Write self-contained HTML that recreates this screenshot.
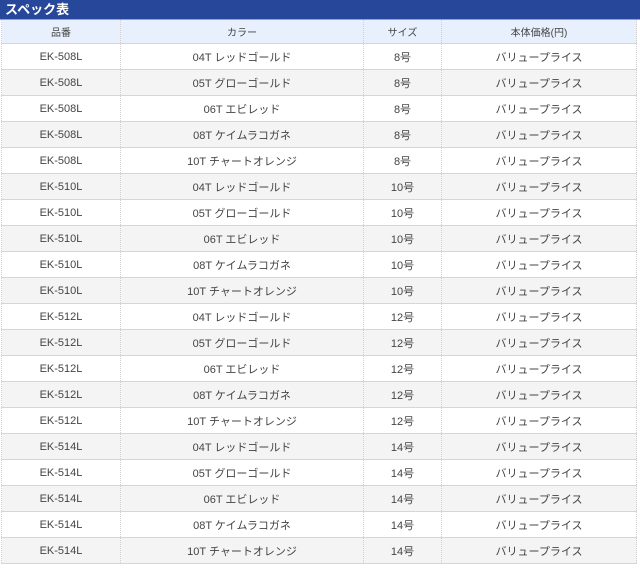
<!DOCTYPE html><html><head><meta charset="utf-8"><style>
body{margin:0;background:#fff;font-family:"Liberation Sans","Noto Sans CJK JP",sans-serif;}
.t{height:19px;background:#27479a;color:#fff;font-weight:bold;font-size:13px;line-height:19px;padding-left:5px;border-bottom:1px solid #8fa3cf}
table{border-collapse:collapse;width:636px;margin-left:1px;table-layout:fixed;font-size:11px;color:#444}
td{text-align:center;height:25px;border-bottom:1px solid #d6d6d6;border-left:1px dotted #d0d0d0;border-right:1px dotted #d0d0d0;padding:0}
tr.h td{height:23px;background:#e7f0fc;font-size:10px}
tr:nth-child(odd):not(.h) td{background:#f4f4f4}
</style></head><body><div class="t">スペック表</div>
<table><colgroup><col style="width:119px"><col style="width:243px"><col style="width:78px"><col></colgroup>
<tr class="h"><td>品番</td><td>カラー</td><td>サイズ</td><td>本体価格(円)</td></tr>
<tr><td>EK-508L</td><td>04T レッドゴールド</td><td>8号</td><td>バリュープライス</td></tr>
<tr><td>EK-508L</td><td>05T グローゴールド</td><td>8号</td><td>バリュープライス</td></tr>
<tr><td>EK-508L</td><td>06T エビレッド</td><td>8号</td><td>バリュープライス</td></tr>
<tr><td>EK-508L</td><td>08T ケイムラコガネ</td><td>8号</td><td>バリュープライス</td></tr>
<tr><td>EK-508L</td><td>10T チャートオレンジ</td><td>8号</td><td>バリュープライス</td></tr>
<tr><td>EK-510L</td><td>04T レッドゴールド</td><td>10号</td><td>バリュープライス</td></tr>
<tr><td>EK-510L</td><td>05T グローゴールド</td><td>10号</td><td>バリュープライス</td></tr>
<tr><td>EK-510L</td><td>06T エビレッド</td><td>10号</td><td>バリュープライス</td></tr>
<tr><td>EK-510L</td><td>08T ケイムラコガネ</td><td>10号</td><td>バリュープライス</td></tr>
<tr><td>EK-510L</td><td>10T チャートオレンジ</td><td>10号</td><td>バリュープライス</td></tr>
<tr><td>EK-512L</td><td>04T レッドゴールド</td><td>12号</td><td>バリュープライス</td></tr>
<tr><td>EK-512L</td><td>05T グローゴールド</td><td>12号</td><td>バリュープライス</td></tr>
<tr><td>EK-512L</td><td>06T エビレッド</td><td>12号</td><td>バリュープライス</td></tr>
<tr><td>EK-512L</td><td>08T ケイムラコガネ</td><td>12号</td><td>バリュープライス</td></tr>
<tr><td>EK-512L</td><td>10T チャートオレンジ</td><td>12号</td><td>バリュープライス</td></tr>
<tr><td>EK-514L</td><td>04T レッドゴールド</td><td>14号</td><td>バリュープライス</td></tr>
<tr><td>EK-514L</td><td>05T グローゴールド</td><td>14号</td><td>バリュープライス</td></tr>
<tr><td>EK-514L</td><td>06T エビレッド</td><td>14号</td><td>バリュープライス</td></tr>
<tr><td>EK-514L</td><td>08T ケイムラコガネ</td><td>14号</td><td>バリュープライス</td></tr>
<tr><td>EK-514L</td><td>10T チャートオレンジ</td><td>14号</td><td>バリュープライス</td></tr>
</table></body></html>
